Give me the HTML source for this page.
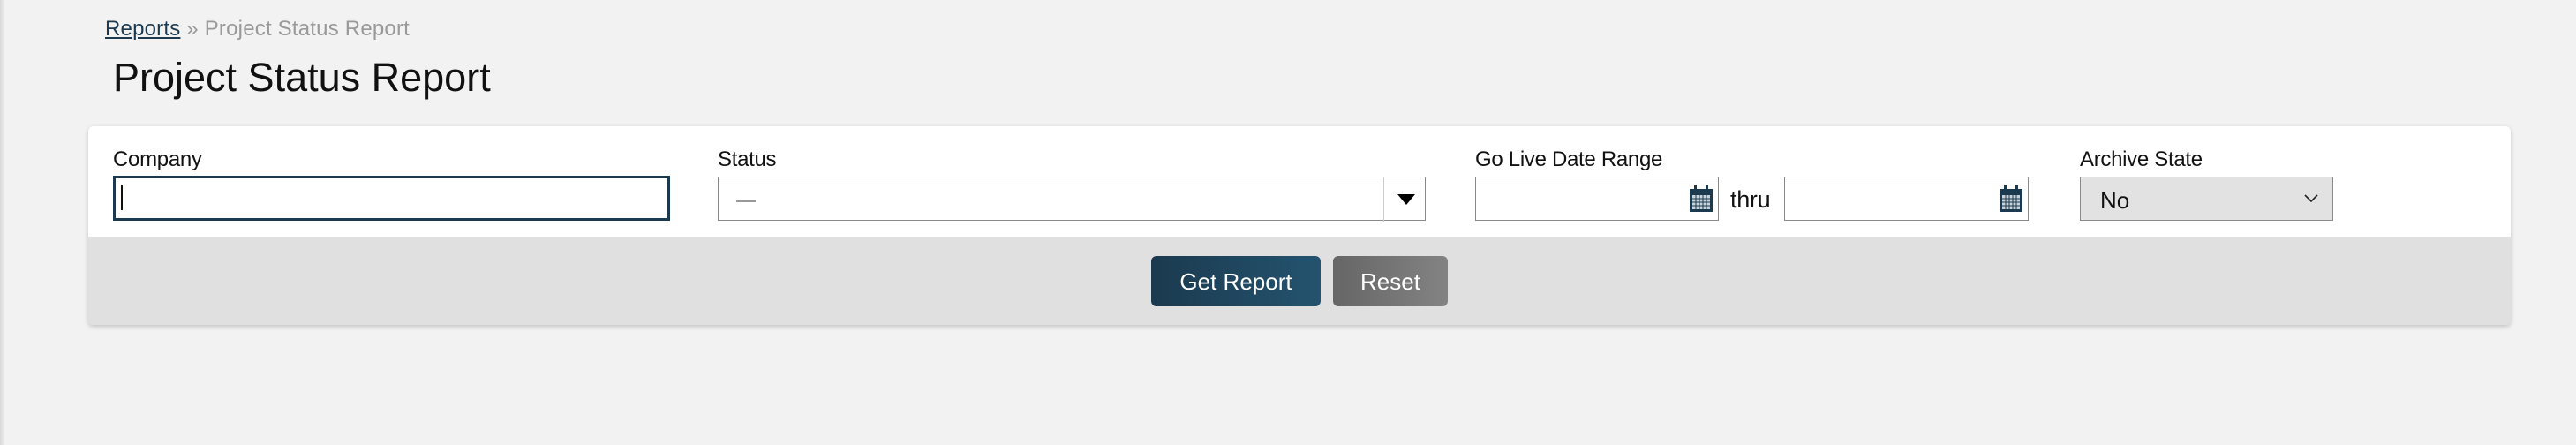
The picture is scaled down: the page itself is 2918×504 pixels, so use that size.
<!DOCTYPE html>
<html><head><style>
*{box-sizing:border-box;margin:0;padding:0}
body{width:2918px;height:504px;background:#f2f2f2;font-family:"Liberation Sans",sans-serif;position:relative;overflow:hidden}
.edge{position:absolute;left:0;top:0;width:6px;height:504px;background:linear-gradient(90deg,#d8d8d8,#f2f2f2)}
.bc{position:absolute;left:119px;top:19px;font-size:24px;color:#999;letter-spacing:0.2px}
.bc a{color:#1b3a4f;text-decoration:underline}
h1{position:absolute;left:128px;top:62px;font-size:45px;font-weight:normal;color:#111;letter-spacing:0}
.card{position:absolute;left:100px;top:143px;width:2744px;height:225px;background:#fff;border-radius:6px;box-shadow:0 2px 6px rgba(0,0,0,.2);overflow:hidden}
.foot{position:absolute;left:0;top:125px;width:100%;height:100px;background:#e0e0e0}
.lbl{position:absolute;top:24px;font-size:24px;color:#111;letter-spacing:-0.3px}
.box{position:absolute;top:57px;height:50px;border:1px solid #8a8a8a;background:#fff}
.btn{position:absolute;top:147px;height:57px;border-radius:6px;color:#fff;font-size:26px;text-align:center;line-height:59px}
</style></head><body>
<div class="edge"></div>
<div class="bc"><a>Reports</a> » Project Status Report</div>
<h1>Project Status Report</h1>
<div class="card">
 <div class="lbl" style="left:28px">Company</div>
 <div class="box" style="left:28px;top:56px;width:631px;height:51px;border:3px solid #1b3a4f"><div style="position:absolute;left:6px;top:8px;width:2px;height:28px;background:#111"></div></div>
 <div class="lbl" style="left:713px">Status</div>
 <div class="box" style="left:713px;width:802px;border-right:none;border-top:1px solid #8a8a8a"><div style="position:absolute;left:20px;top:26px;width:22px;height:2px;background:#999"></div>
  <div style="position:absolute;left:753px;top:0;width:1px;height:50px;background:#ccc"></div>
  <div style="position:absolute;left:769px;top:19px;width:0;height:0;border-left:10px solid transparent;border-right:10px solid transparent;border-top:12px solid #000"></div>
  <div style="position:absolute;right:0;top:0;width:1px;height:48px;background:#8a8a8a"></div></div>
 <div class="lbl" style="left:1571px">Go Live Date Range</div>
 <div class="box" style="left:1571px;width:276px"><svg style="position:absolute;right:6px;top:9px" width="26" height="30" viewBox="0 0 26 30"><rect x="0" y="4" width="26" height="26" fill="#1b3a4f"/><rect x="5" y="0" width="3" height="7" fill="#1b3a4f"/><rect x="18" y="0" width="3" height="7" fill="#1b3a4f"/><g fill="#c8d2da"><rect x="3" y="11" width="20" height="16"/></g><g stroke="#1b3a4f" stroke-width="1"><path d="M7 11v16M11 11v16M15 11v16M19 11v16M3 15h20M3 19h20M3 23h20"/></g></svg></div>
 <div class="lbl" style="left:1860px;top:68px;font-size:27px">thru</div>
 <div class="box" style="left:1921px;width:277px"><svg style="position:absolute;right:6px;top:9px" width="26" height="30" viewBox="0 0 26 30"><rect x="0" y="4" width="26" height="26" fill="#1b3a4f"/><rect x="5" y="0" width="3" height="7" fill="#1b3a4f"/><rect x="18" y="0" width="3" height="7" fill="#1b3a4f"/><g fill="#c8d2da"><rect x="3" y="11" width="20" height="16"/></g><g stroke="#1b3a4f" stroke-width="1"><path d="M7 11v16M11 11v16M15 11v16M19 11v16M3 15h20M3 19h20M3 23h20"/></g></svg></div>
 <div class="lbl" style="left:2256px">Archive State</div>
 <div class="box" style="left:2256px;width:287px;background:#e2e2e2"><div style="position:absolute;left:22px;top:11px;font-size:26px;color:#111">No</div><svg style="position:absolute;right:16px;top:19px" width="16" height="10"><path d="M1 1l7 7 7-7" fill="none" stroke="#222" stroke-width="1.6"/></svg></div>
 <div class="foot"></div>
 <div class="btn" style="left:1204px;width:192px;background:linear-gradient(90deg,#1b3a4f,#24536f)">Get Report</div>
 <div class="btn" style="left:1410px;width:130px;background:linear-gradient(90deg,#666,#838383)">Reset</div>
</div>
</body></html>
